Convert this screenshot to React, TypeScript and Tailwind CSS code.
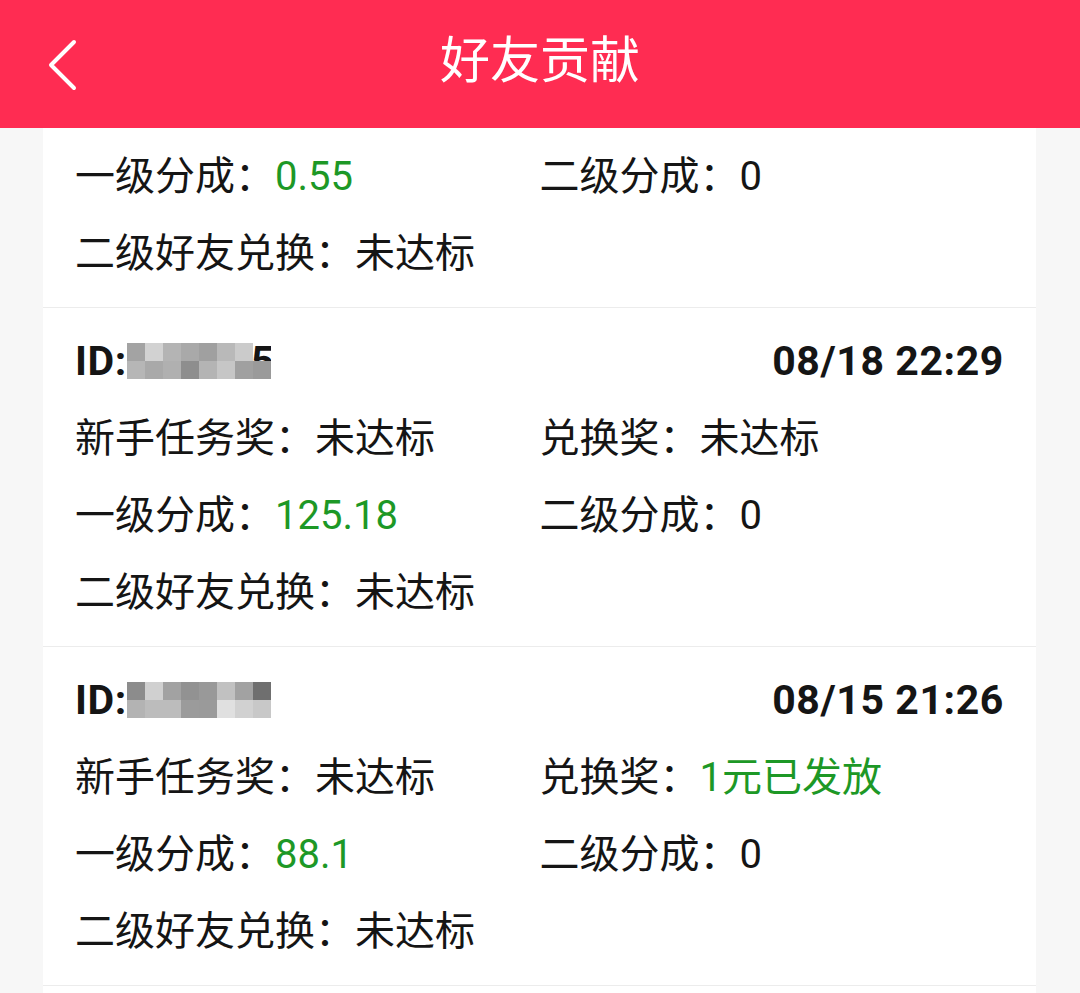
import { type ReactNode } from "react";

type Cell = { label: string; value: string; green?: boolean };

type Record = {
    date: string;
    mosaic: string[][];
    peek?: string;
    rows: Cell[][];
};

const GREEN = "text-[#1d9826]";

// first record is scrolled under the title bar, only its last two rows show
const partialRows: Cell[][] = [
    [{ label: "一级分成：", value: "0.55", green: true }, { label: "二级分成：", value: "0" }],
    [{ label: "二级好友兑换：", value: "未达标" }],
];

const records: Record[] = [
    {
        date: "08/18 22:29",
        peek: "5",
        mosaic: [
            ["#a3a3a3", "#d2d2d2", "#b4b4b4", "#a9a9a9", "#a0a0a0", "#b9b9b9", "#cbcbcb", ""],
            ["#b6b6b6", "#a9a9a9", "#b0b0b0", "#8e8e8e", "#b4b4b4", "#c6c6c6", "#a0a0a0", "#9a9a9a"],
        ],
        rows: [
            [{ label: "新手任务奖：", value: "未达标" }, { label: "兑换奖：", value: "未达标" }],
            [{ label: "一级分成：", value: "125.18", green: true }, { label: "二级分成：", value: "0" }],
            [{ label: "二级好友兑换：", value: "未达标" }],
        ],
    },
    {
        date: "08/15 21:26",
        mosaic: [
            ["#8c8c8c", "#d0d0d0", "#a2a2a2", "#929292", "#999999", "#c1c1c1", "#a2a2a2", "#6f6f6f"],
            ["#b3b3b3", "#bcbcbc", "#bcbcbc", "#9b9b9b", "#9a9a9a", "#e0e0e0", "#d1d1d1", "#c8c8c8"],
        ],
        rows: [
            [{ label: "新手任务奖：", value: "未达标" }, { label: "兑换奖：", value: "1元已发放", green: true }],
            [{ label: "一级分成：", value: "88.1", green: true }, { label: "二级分成：", value: "0" }],
            [{ label: "二级好友兑换：", value: "未达标" }],
        ],
    },
];

// blurred user id, drawn as grey squares
function Mosaic({ grid, peek }: { grid: string[][]; peek?: string }) {
    return (
        <div className="flex flex-col">
            {grid.map((row, r) => (
                <div key={r} className="flex">
                    {row.map((c, i) =>
                        c ? (
                            <div key={i} className="w-[18px] h-[18px]" style={{ background: c }} />
                        ) : (
                            <div key={i} className="w-[18px] h-[18px] overflow-hidden">
                                <span className="block text-[40px] font-bold leading-[36px] -ml-[2px] mt-[1px]">{peek}</span>
                            </div>
                        )
                    )}
                </div>
            ))}
        </div>
    );
}

function Item({ cell }: { cell: Cell }): ReactNode {
    return (
        <div className="whitespace-nowrap">
            <span>{cell.label}</span>
            <span className={cell.green ? GREEN : ""}>{cell.value}</span>
        </div>
    );
}

function Rows({ rows }: { rows: Cell[][] }) {
    return (
        <>
            {rows.map((row, i) => (
                <div key={i} className="grid grid-cols-2">
                    {row.map((cell) => (
                        <Item key={cell.label} cell={cell} />
                    ))}
                </div>
            ))}
        </>
    );
}

function RecordCard({ rec }: { rec: Record }) {
    return (
        <div className="border-b border-[#ececec] px-8 py-[15px]">
            <div className="flex items-center justify-between h-[77px] font-bold text-[41px] tracking-[0.6px]">
                <div className="flex items-center">
                    <span>ID:</span>
                    <Mosaic grid={rec.mosaic} peek={rec.peek} />
                </div>
                <span>{rec.date}</span>
            </div>
            <Rows rows={rec.rows} />
        </div>
    );
}

export default function App() {
    return (
        <div className="w-[1080px] h-[993px] bg-[#f7f7f7] flex flex-col overflow-hidden" style={{ fontFamily: "Roboto, 'Noto Sans CJK SC', sans-serif" }}>
            <div className="h-[128px] shrink-0 bg-[#ff2c52] grid grid-cols-[1fr_auto_1fr] items-center">
                <div className="pl-[46px] pt-[2px]">
                    <svg width="36" height="54" viewBox="0 0 36 54" fill="none">
                        <path d="M28 4 L5 27 L28 50" stroke="white" strokeWidth="4" strokeLinecap="round" strokeLinejoin="round" />
                    </svg>
                </div>
                <h1 className="text-white text-[50px] leading-none font-normal pb-[6px]">好友贡献</h1>
                <div />
            </div>
            <div className="flex-1 ml-[43px] mr-[44px] bg-white text-[40px] leading-[77px] text-[#151515]">
                <div className="border-b border-[#ececec] px-8 pt-[9.5px] pb-[15px]">
                    <Rows rows={partialRows} />
                </div>
                {records.map((r, i) => (
                    <RecordCard key={i} rec={r} />
                ))}
            </div>
        </div>
    );
}
